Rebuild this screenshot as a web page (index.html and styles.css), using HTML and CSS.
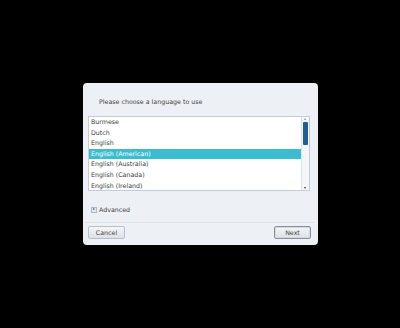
FILE: index.html
```html
<!DOCTYPE html>
<html>
<head>
<meta charset="utf-8">
<link rel="stylesheet" href="styles.css">
</head>
<body>
<div class="screen">
  <div class="dialog">
    <div class="prompt">Please choose a language to use</div>
    <div class="listbox">
      <ul class="items">
        <li>Burmese</li>
        <li>Dutch</li>
        <li>English</li>
        <li class="sel">English (American)</li>
        <li>English (Australia)</li>
        <li>English (Canada)</li>
        <li>English (Ireland)</li>
      </ul>
      <div class="scrollbar">
        <div class="arrow up"></div>
        <div class="track"><div class="thumb"></div></div>
        <div class="arrow down"></div>
      </div>
    </div>
    <div class="advanced"><span class="exp"></span>Advanced</div>
    <div class="sep"></div>
    <div class="buttons">
      <button class="btn">Cancel</button>
      <button class="btn next">Next</button>
    </div>
  </div>
</div>
</body>
</html>
```
FILE: styles.css
```css
html, body { margin: 0; padding: 0; background: #000; }
.screen {
  width: 400px; height: 328px;
  padding: 83px 0 0 83px;
  box-sizing: border-box;
  font-family: "DejaVu Sans", sans-serif;
  font-size: 6.3px;
  color: #3c3c3c;
  -webkit-font-smoothing: antialiased;
}
.dialog {
  width: 235px; height: 162px;
  background: #edf0f5;
  border-radius: 4px;
  box-sizing: border-box;
  padding-top: 14px;
  display: flex; flex-direction: column;
}
.prompt { padding-left: 16px; height: 9px; line-height: 9px; color: #444; }
.listbox {
  margin: 10px 0 0 5px;
  width: 222px; height: 75px;
  box-sizing: border-box;
  border: 1px solid #c6ccd6;
  background: #fff;
  display: flex;
}
.items { list-style: none; margin: 0; padding: 0; flex: 1; }
.items li { height: 10.6px; line-height: 10.6px; padding-left: 2px; color: #3c3c3c; }
.items li.sel { background: #3bbdcf; color: #fff; }
.scrollbar {
  width: 7px; border-left: 1px solid #dde2ea; background: #f4f6f9;
  display: flex; flex-direction: column;
}
.arrow { height: 5px; position: relative; }
.arrow.up::after, .arrow.down::after {
  content: ""; position: absolute; left: 2px; width: 0; height: 0;
  border-left: 1.5px solid transparent; border-right: 1.5px solid transparent;
}
.arrow.up::after { top: 1px; border-bottom: 2px solid #8a93a0; }
.arrow.down::after { top: 2px; border-top: 2px solid #333; }
.track { flex: 1; padding: 0 1px; }
.thumb { height: 23px; background: #1f5f95; border-radius: 1px; }
.advanced {
  margin: 14px 0 0 8px; height: 9px; line-height: 9px;
  display: flex; align-items: center; color: #3c3c3c;
}
.exp {
  width: 4px; height: 4px; border: 1px solid #a9b8cc; background: #dfe8f3;
  margin-right: 2px; position: relative;
}
.exp::after {
  content: ""; position: absolute; left: 1px; top: 0.5px;
  border-top: 1.5px solid transparent; border-bottom: 1.5px solid transparent;
  border-left: 2px solid #3a5f8f;
}
.sep { margin: 8px 4px 0 2px; height: 1px; background: #dde1e8; }
.buttons {
  display: flex; justify-content: space-between;
  margin: 3px 7px 0 5px;
}
.btn {
  width: 37px; height: 13px; padding: 0; margin: 0;
  font-family: "DejaVu Sans", sans-serif; font-size: 6.3px; color: #444;
  background: linear-gradient(#f4f6f8, #dde1e6);
  border: 1px solid #b9bfc8; border-radius: 2px;
}
.btn.next { border-color: #8b919a; box-shadow: inset 0 0 0 1px #d5d9df; }
```
